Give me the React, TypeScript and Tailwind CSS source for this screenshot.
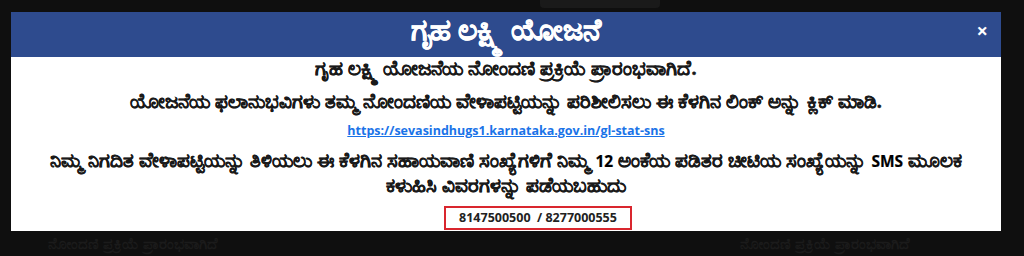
import React from 'react';

const App = () => {
  return (
    <div className="relative h-[256px] w-[1024px] overflow-hidden bg-[#0f0f0f]" style={{ fontFamily: '"Open Sans", "Noto Sans", sans-serif' }}>
      {/* faint page content behind the overlay */}
      <div className="absolute left-[540px] top-[-6px] h-[14px] w-[120px] rounded bg-[#1a1a1a]" />
      <div className="absolute left-[48px] top-[232px] text-[15px] font-bold text-[#1b1b1b]">ನೋಂದಣಿ ಪ್ರಕ್ರಿಯೆ ಪ್ರಾರಂಭವಾಗಿದೆ</div>
      <div className="absolute left-[740px] top-[232px] text-[15px] font-bold text-[#1b1b1b]">ನೋಂದಣಿ ಪ್ರಕ್ರಿಯೆ ಪ್ರಾರಂಭವಾಗಿದೆ</div>

      <div className="absolute left-[11px] top-[12px] w-[990px] bg-white">
        <div className="relative flex h-[45px] items-center justify-center bg-[#2e4b8e] pb-[12px]">
          <h1 className="text-[30px] leading-[36px] font-bold text-white [-webkit-text-stroke:0.6px_white]">ಗೃಹ ಲಕ್ಷ್ಮಿ ಯೋಜನೆ</h1>
          <span className="absolute right-[13px] top-[4px] text-[20px] font-bold text-white">×</span>
        </div>
        <div className="flex flex-col items-center px-6 pb-[1px] text-center text-[19.5px] font-bold text-[#1a1a1a] [-webkit-text-stroke:0.4px_#1a1a1a]">
          <p className="leading-[22px]">ಗೃಹ ಲಕ್ಷ್ಮಿ ಯೋಜನೆಯ ನೋಂದಣಿ ಪ್ರಕ್ರಿಯೆ ಪ್ರಾರಂಭವಾಗಿದೆ.</p>
          <p className="mt-[11px] leading-[22px]">ಯೋಜನೆಯ ಫಲಾನುಭವಿಗಳು ತಮ್ಮ ನೋಂದಣಿಯ ವೇಳಾಪಟ್ಟಿಯನ್ನು ಪರಿಶೀಲಿಸಲು ಈ ಕೆಳಗಿನ ಲಿಂಕ್ ಅನ್ನು ಕ್ಲಿಕ್ ಮಾಡಿ.</p>
          <a href="#" className="mt-[9px] text-[12.5px] leading-[20px] text-[#1a73e8] underline [-webkit-text-stroke:0px]">https://sevasindhugs1.karnataka.gov.in/gl-stat-sns</a>
          <p className="mt-[7px] max-w-[935px] leading-[24px]">
            ನಿಮ್ಮ ನಿಗದಿತ ವೇಳಾಪಟ್ಟಿಯನ್ನು ತಿಳಿಯಲು ಈ ಕೆಳಗಿನ ಸಹಾಯವಾಣಿ ಸಂಖ್ಯೆಗಳಿಗೆ ನಿಮ್ಮ <span className="text-[15.5px] text-black [-webkit-text-stroke:0.2px_black]">12</span> ಅಂಕೆಯ ಪಡಿತರ ಚೀಟಿಯ ಸಂಖ್ಯೆಯನ್ನು <span className="text-[15.5px] text-black [-webkit-text-stroke:0.2px_black]">SMS</span> ಮೂಲಕ ಕಳುಹಿಸಿ ವಿವರಗಳನ್ನು ಪಡೆಯಬಹುದು
          </p>
          <div className="ml-[64px] mt-[9px] border-2 border-[#d9262e] px-[13px] text-[12.5px] leading-[20px] text-[#222] [-webkit-text-stroke:0px]">
            8147500500&nbsp; / 8277000555
          </div>
        </div>
      </div>
    </div>
  );
};

export default App;
